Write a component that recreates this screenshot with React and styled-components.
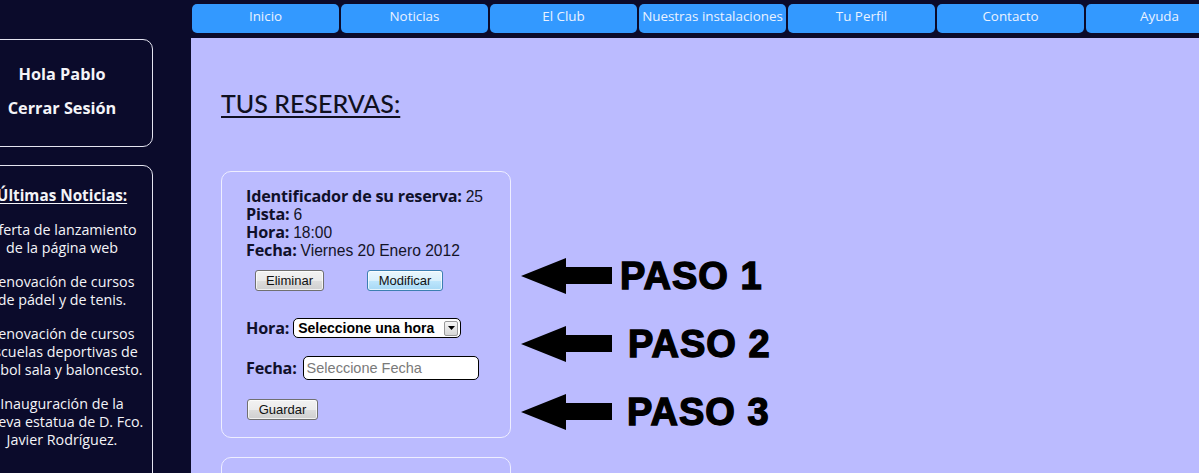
import React from "react";
import styled, { createGlobalStyle } from "styled-components";

const Global = createGlobalStyle`
  html, body { margin: 0; padding: 0; }
  body {
    background: #0b0b2b;
    overflow: hidden;
    width: 1199px;
    height: 473px;
  }
`;

const Page = styled.div`
  display: grid;
  grid-template-columns: 191px 1fr;
  height: 473px;
  overflow: hidden;
`;

const Sidebar = styled.aside`
  display: flex;
  flex-direction: column;
  gap: 18px;
  padding-top: 39px;
  font-family: "Open Sans", Lato, sans-serif;
  color: #f4f4f8;
`;

const SideBox = styled.div`
  box-sizing: border-box;
  width: 182px;
  margin-left: -29px;
  border: 1px solid #e4e4f0;
  border-radius: 10px;
  text-align: center;
  padding: ${(p) => p.$pad};
  min-height: ${(p) => p.$min || "auto"};
`;

const Greeting = styled.p`
  margin: 0;
  font-size: 16.3px;
  font-weight: 700;
  line-height: 18px;
  & + & { margin-top: 16px; }
`;

const NewsTitle = styled.h3`
  margin: 0 0 17px;
  font-size: 15.3px;
  font-weight: 700;
  line-height: 18px;
  text-decoration: underline;
  text-underline-offset: 2px;
`;

const NewsItem = styled.p`
  margin: 0;
  font-size: 14.3px;
  line-height: 18px;
  & + & { margin-top: 16px; }
`;

const Main = styled.main`
  display: flex;
  flex-direction: column;
  min-width: 0;
`;

const Nav = styled.nav`
  display: flex;
  gap: 2px;
  height: 38px;
  box-sizing: border-box;
  padding: 4px 0 0 1px;
`;

const NavButton = styled.a`
  flex: 0 0 147px;
  height: 29px;
  box-sizing: border-box;
  background: #3399ff;
  border-radius: 5px;
  color: #eaf2ff;
  font-family: "Open Sans", Lato, sans-serif;
  font-size: 13.4px;
  line-height: 25px;
  text-align: center;
  white-space: nowrap;
  text-decoration: none;
`;

const Content = styled.section`
  flex: 1;
  background: #bbbbff;
  padding: 0 30px;
  overflow: hidden;
`;

const Title = styled.h1`
  margin: 50px 0 0;
  font-family: Lato, "Open Sans", sans-serif;
  font-size: 25px;
  font-weight: 500;
  line-height: 30px;
  color: #101020;
  text-decoration: underline;
  text-decoration-thickness: 2px;
  text-underline-offset: 3px;
`;

const Row = styled.div`
  display: flex;
  align-items: flex-start;
  margin-top: 53px;
`;

const Cards = styled.div`
  display: flex;
  flex-direction: column;
`;

const Card = styled.div`
  box-sizing: border-box;
  width: 290px;
  border: 1px solid #eeeeff;
  border-radius: 10px;
  padding: 15px 24px 17px;
  min-height: ${(p) => p.$min || "auto"};
  & + & { margin-top: 19px; }
`;

const InfoLine = styled.div`
  display: flex;
  align-items: baseline;
  height: 18px;
  font-family: "Liberation Sans", Arial, sans-serif;
  font-size: 15.6px;
  line-height: 18px;
  color: #141428;
  white-space: nowrap;
`;

const Label = styled.span`
  font-family: "Open Sans", Lato, sans-serif;
  font-weight: 700;
  font-size: 16.2px;
  line-height: 18px;
  letter-spacing: -0.2px;
  color: #10102a;
  margin-right: ${(p) => p.$gap || 4}px;
`;

const ButtonRow = styled.div`
  display: flex;
  margin-top: 11px;
  padding-left: 9px;
  gap: 43px;
`;

const WinButton = styled.button`
  box-sizing: border-box;
  width: ${(p) => p.$w}px;
  height: 21px;
  padding: 0;
  font-family: "Liberation Sans", Arial, sans-serif;
  font-size: 13px;
  color: #111;
  border-radius: 3px;
  border: 1px solid ${(p) => (p.$active ? "#3c7fb1" : "#707070")};
  background: ${(p) =>
    p.$active
      ? "linear-gradient(#eaf6fd 0%, #d9f0fc 50%, #bee6fd 51%, #a7d9f5 100%)"
      : "linear-gradient(#f2f2f2 0%, #ebebeb 50%, #dddddd 51%, #cfcfcf 100%)"};
  box-shadow: inset 0 0 0 1px rgba(255,255,255,0.7);
`;

const FieldRow = styled.div`
  display: flex;
  align-items: center;
  height: ${(p) => p.$h}px;
  margin-top: ${(p) => p.$mt}px;
`;

const SelectBox = styled.div`
  box-sizing: border-box;
  display: flex;
  align-items: center;
  width: 168px;
  height: 20px;
  border: 1px solid #000;
  border-radius: 5px;
  background: #fff;
  padding: 0 2px 0 4px;
`;

const SelectNative = styled.select`
  flex: 1;
  min-width: 0;
  appearance: none;
  -webkit-appearance: none;
  border: none;
  outline: none;
  background: transparent;
  padding: 0;
  font-family: "Liberation Sans", Arial, sans-serif;
  font-weight: 700;
  font-size: 14px;
  color: #000;
  height: 18px;
`;

const SelectArrow = styled.span`
  box-sizing: border-box;
  width: 14px;
  height: 15px;
  border: 1px solid #9a9a9a;
  border-radius: 2px;
  background: linear-gradient(#f6f6f6, #d6d6d6);
  display: flex;
  align-items: center;
  justify-content: center;
`;

const TextInput = styled.input`
  box-sizing: border-box;
  width: 176px;
  height: 24px;
  border: 1px solid #000;
  border-radius: 5px;
  padding: 0 3px;
  font-family: "Liberation Sans", Arial, sans-serif;
  font-size: 14.5px;
  background: #fff;
  outline: none;
  &::placeholder { color: #7a7a7a; }
`;

const SaveRow = styled.div`
  margin-top: 19px;
  padding-left: 1px;
  display: flex;
`;

const Steps = styled.div`
  display: flex;
  flex-direction: column;
  gap: 32px;
  margin-left: 10px;
  padding-top: 87px;
`;

const Step = styled.div`
  display: flex;
  align-items: center;
  height: 36px;
`;

const StepText = styled.span`
  margin-left: ${(p) => p.$ml}px;
  font-family: "Liberation Sans", Arial, sans-serif;
  font-weight: 700;
  font-size: 38px;
  line-height: 36px;
  color: #000;
  -webkit-text-stroke: 1.4px #000;
  letter-spacing: 1px;
  white-space: nowrap;
`;

const Arrow = () => (
  <svg width="92" height="36" viewBox="0 0 92 36">
    <polygon points="0,18 45,0 45,9 91,9 91,26 45,26 45,36" fill="#000" />
  </svg>
);

const navItems = ["Inicio", "Noticias", "El Club", "Nuestras instalaciones", "Tu Perfil", "Contacto", "Ayuda"];

const news = [
  ["Oferta de lanzamiento", "de la página web"],
  ["Renovación de cursos", "de pádel y de tenis."],
  ["Renovación de cursos", "escuelas deportivas de", "fútbol sala y baloncesto."],
  ["Inauguración de la", "nueva estatua de D. Fco.", "Javier Rodríguez."],
];

const steps = [
  { label: "PASO 1", ml: 7 },
  { label: "PASO 2", ml: 15 },
  { label: "PASO 3", ml: 14 },
];

export default function App() {
  return (
    <>
      <Global />
      <Page>
        <Sidebar>
          <SideBox $pad="25px 0 29px">
            <Greeting>Hola Pablo</Greeting>
            <Greeting>Cerrar Sesión</Greeting>
          </SideBox>
          <SideBox $pad="20px 0 40px" $min="400px">
            <NewsTitle>Últimas Noticias:</NewsTitle>
            {news.map((lines, i) => (
              <NewsItem key={i}>
                {lines.map((l, j) => (
                  <React.Fragment key={j}>
                    {l}
                    {j < lines.length - 1 && <br />}
                  </React.Fragment>
                ))}
              </NewsItem>
            ))}
          </SideBox>
        </Sidebar>
        <Main>
          <Nav>
            {navItems.map((n) => (
              <NavButton key={n} href="#">{n}</NavButton>
            ))}
          </Nav>
          <Content>
            <Title>TUS RESERVAS:</Title>
            <Row>
              <Cards>
                <Card>
                  <InfoLine><Label>Identificador de su reserva:</Label>25</InfoLine>
                  <InfoLine><Label>Pista:</Label>6</InfoLine>
                  <InfoLine><Label>Hora:</Label>18:00</InfoLine>
                  <InfoLine><Label>Fecha:</Label>Viernes 20 Enero 2012</InfoLine>
                  <ButtonRow>
                    <WinButton $w={69}>Eliminar</WinButton>
                    <WinButton $w={76} $active>Modificar</WinButton>
                  </ButtonRow>
                  <FieldRow $mt={27} $h={20}>
                    <Label>Hora:</Label>
                    <SelectBox>
                      <SelectNative defaultValue="">
                        <option value="">Seleccione una hora</option>
                      </SelectNative>
                      <SelectArrow>
                        <svg width="7" height="4" viewBox="0 0 7 4">
                          <polygon points="0,0 7,0 3.5,4" fill="#000" />
                        </svg>
                      </SelectArrow>
                    </SelectBox>
                  </FieldRow>
                  <FieldRow $mt={18} $h={24}>
                    <Label $gap={6}>Fecha:</Label>
                    <TextInput placeholder="Seleccione Fecha" />
                  </FieldRow>
                  <SaveRow>
                    <WinButton $w={71}>Guardar</WinButton>
                  </SaveRow>
                </Card>
                <Card $min="120px" />
              </Cards>
              <Steps>
                {steps.map((s) => (
                  <Step key={s.label}>
                    <Arrow />
                    <StepText $ml={s.ml}>{s.label}</StepText>
                  </Step>
                ))}
              </Steps>
            </Row>
          </Content>
        </Main>
      </Page>
    </>
  );
}
